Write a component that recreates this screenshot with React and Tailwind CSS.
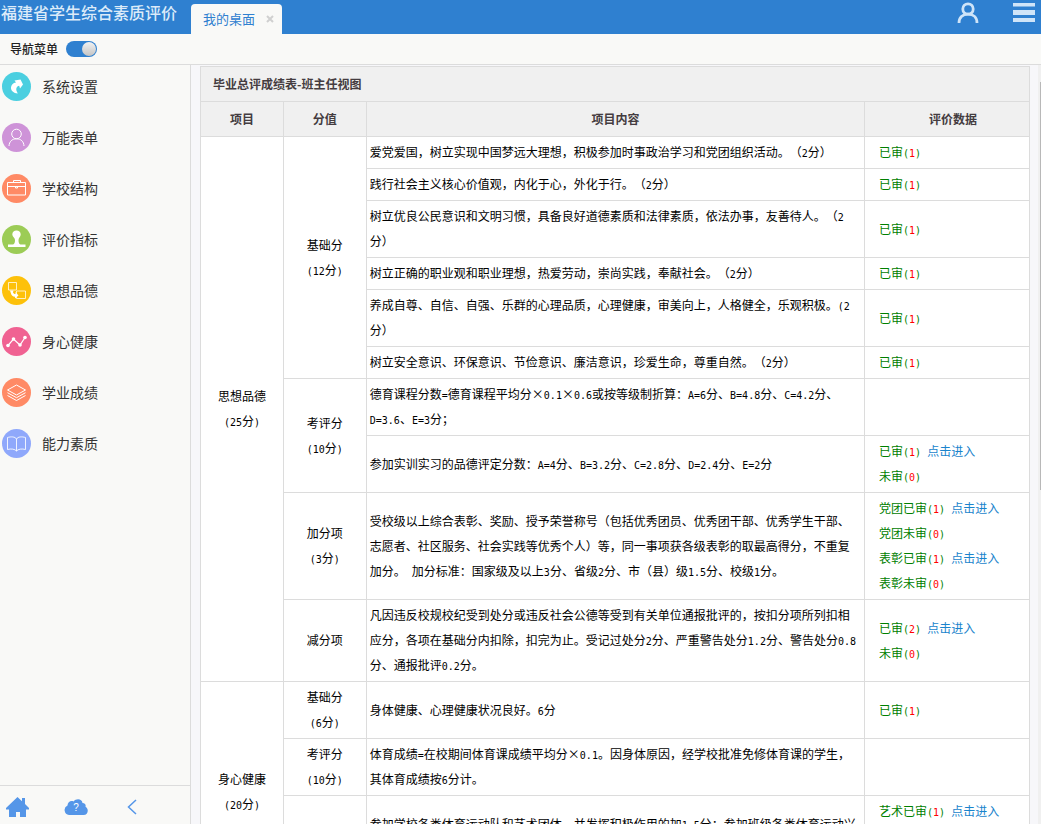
import { Fragment } from 'react';

const MENU = [
  { label: '系统设置', color: 'bg-[#4bcfe0]', icon: 'share' },
  { label: '万能表单', color: 'bg-[#ce93d8]', icon: 'person' },
  { label: '学校结构', color: 'bg-[#ff8a65]', icon: 'briefcase' },
  { label: '评价指标', color: 'bg-[#9ccc56]', icon: 'stamp' },
  { label: '思想品德', color: 'bg-[#fdc10a]', icon: 'swap' },
  { label: '身心健康', color: 'bg-[#f06292]', icon: 'chart' },
  { label: '学业成绩', color: 'bg-[#ff8a65]', icon: 'layers' },
  { label: '能力素质', color: 'bg-[#8fa8fb]', icon: 'book' },
];

const passed = (n, prefix = '', link = false) => ({ label: prefix + '已审', n, link });
const pending = (n, prefix = '') => ({ label: prefix + '未审', n, link: false });

const ROWS = [
  {
    group: { name: '思想品德', score: '(25分)', span: 10 },
    part: { name: '基础分', score: '(12分)', span: 6 },
    text: '爱党爱国，树立实现中国梦远大理想，积极参加时事政治学习和党团组织活动。（2分）',
    data: [passed(1)],
  },
  { text: '践行社会主义核心价值观，内化于心，外化于行。（2分）', data: [passed(1)] },
  { text: '树立优良公民意识和文明习惯，具备良好道德素质和法律素质，依法办事，友善待人。（2分）', data: [passed(1)] },
  { text: '树立正确的职业观和职业理想，热爱劳动，崇尚实践，奉献社会。（2分）', data: [passed(1)] },
  { text: '养成自尊、自信、自强、乐群的心理品质，心理健康，审美向上，人格健全，乐观积极。(2分）', data: [passed(1)] },
  { text: '树立安全意识、环保意识、节俭意识、廉洁意识，珍爱生命，尊重自然。（2分）', data: [passed(1)] },
  {
    part: { name: '考评分', score: '(10分)', span: 2 },
    text: '德育课程分数=德育课程平均分×0.1×0.6或按等级制折算：A=6分、B=4.8分、C=4.2分、D=3.6、E=3分；',
    data: [],
  },
  {
    text: '参加实训实习的品德评定分数：A=4分、B=3.2分、C=2.8分、D=2.4分、E=2分',
    data: [passed(1, '', true), pending(0)],
  },
  {
    part: { name: '加分项', score: '(3分)', span: 1 },
    text: '受校级以上综合表彰、奖励、授予荣誉称号（包括优秀团员、优秀团干部、优秀学生干部、志愿者、社区服务、社会实践等优秀个人）等，同一事项获各级表彰的取最高得分，不重复加分。 加分标准：国家级及以上3分、省级2分、市（县）级1.5分、校级1分。',
    data: [passed(1, '党团', true), pending(0, '党团'), passed(1, '表彰', true), pending(0, '表彰')],
  },
  {
    part: { name: '减分项', span: 1 },
    text: '凡因违反校规校纪受到处分或违反社会公德等受到有关单位通报批评的，按扣分项所列扣相应分，各项在基础分内扣除，扣完为止。受记过处分2分、严重警告处分1.2分、警告处分0.8分、通报批评0.2分。',
    data: [passed(2, '', true), pending(0)],
  },
  {
    group: { name: '身心健康', score: '(20分)', span: 3 },
    part: { name: '基础分', score: '(6分)', span: 1 },
    text: '身体健康、心理健康状况良好。6分',
    data: [passed(1)],
  },
  {
    part: { name: '考评分', score: '(10分)', span: 1 },
    text: '体育成绩=在校期间体育课成绩平均分×0.1。因身体原因，经学校批准免修体育课的学生，其体育成绩按6分计。',
    data: [],
  },
  {
    part: { name: '加分项', score: '(4分)', span: 1 },
    text: '参加学校各类体育运动队和艺术团体，并发挥积极作用的加1.5分；参加班级各类体育运动兴趣小组和艺术兴趣小组，并发挥积极作用的加1分；参加校级以上体育比赛和艺术展演获得名次的，按级别相应加分，同一事项取最高得分。',
    data: [passed(1, '艺术', true), pending(0, '艺术'), passed(1, '体育', true), pending(0, '体育')],
  },
];

/* Half-width characters are set in a monospaced face beside the Chinese text. */
function Mixed({ children }) {
  return children.split(/([\x20-\x7e]+)/).map((run, i) =>
    i % 2 ? (
      <span key={i} className="font-['DejaVu_Sans_Mono',monospace] text-[10px] leading-none">{run}</span>
    ) : (
      <Fragment key={i}>{run}</Fragment>
    ),
  );
}

function MenuIcon({ name }) {
  const line = { fill: 'none', stroke: '#fff', strokeWidth: 1 };
  return (
    <svg viewBox="0 0 29 29" className="size-[29px]" aria-hidden="true">
      {name === 'share' && (
        <path fill="#fff" d="M12.500 8.500 18.500 7.500 21 12.500 18 16.500 17.200 13.800C14.500 14.500 13 17 15.800 21.500 11.500 21.200 8.800 18.800 9 15.500 9.200 12.800 11 11 14 10.500Z" />
      )}
      {name === 'person' && (
        <g {...line}>
          <circle cx="14.5" cy="11" r="4.800" />
          <path d="M7 23c.3-4.500 3-7.200 7.500-7.200s7.200 2.700 7.500 7.200" />
        </g>
      )}
      {name === 'briefcase' && (
        <g {...line}>
          <path d="M5.500 8.500h18v12.500h-18zM5.500 12.500h18M11.500 8.500v-2h7v2M13.500 12.500v1.500h2v-1.500" />
        </g>
      )}
      {name === 'stamp' && (
        <path fill="#fff" d="M14.500 5.500a4 4 0 0 1 4.200 4c0 2.200-2.200 3.200-2.200 5.500 0 2.500.5 4.200 2 4.500h5V22H6v-2.500h5c1.500-.3 2-2 2-4.500 0-2.300-2.700-3.300-2.700-5.500a4 4 0 0 1 4.200-4z" />
      )}
      {name === 'swap' && (
        <g {...line} strokeOpacity="0.75">
          <path d="M6.500 6.500h8v7.500h-8zM14.500 15h9v7.500h-9z" />
          <path fill="#fff" stroke="none" d="m8 14.500 3.500 0-.5 2c.8 1.200 1.500 1.600 2.500 1.600v-2.100l3 3.500-3.500 3v-1.800c-2.200 0-3.700-1.200-4-3.200z" />
        </g>
      )}
      {name === 'chart' && (
        <g {...line} strokeWidth="1.200">
          <path d="M6 18.500 11.500 12l6.500 6L23 10.500" />
          <g fill="#fff" stroke="none">
            <circle cx="6" cy="18.500" r="1.800" />
            <circle cx="11.500" cy="12" r="1.800" />
            <circle cx="18" cy="18" r="1.800" />
            <circle cx="23" cy="10.500" r="1.800" />
          </g>
        </g>
      )}
      {name === 'layers' && (
        <g {...line}>
          <path d="m14.500 7 9 5-9 5-9-5zM5.500 14.700l9 5 9-5M5.500 17.500l9 5 9-5" />
        </g>
      )}
      {name === 'book' && (
        <g {...line} strokeOpacity="0.85">
          <path d="M14.500 10c-1.500-2.500-5.500-2.500-9-1.500v12c3.500-1 7.500-.5 9 1.500 1.500-2 5.500-2.500 9-1.500v-12c-3.500-1-7.500-1-9 1.500zM14.500 10v12" />
        </g>
      )}
    </svg>
  );
}

function Header() {
  return (
    <header className="flex h-[34px] shrink-0 bg-[#2f80d0]">
      <h1 className="w-[191px] shrink-0 pl-px text-[16px] leading-6 font-medium whitespace-nowrap text-[#dcebf9]">福建省学生综合素质评价</h1>
      <div className="mt-1 flex items-center gap-[11px] rounded-t bg-[#f9f9f7] pr-2 pl-3 text-[13px] text-[#2f80d0]">
        <a href="#desktop">我的桌面</a>
        <button type="button" aria-label="关闭" className="text-[#d0d0d0]">
          <svg viewBox="0 0 8 8" className="size-2" fill="none" stroke="currentColor" strokeWidth="2" aria-hidden="true">
            <path d="m1 1 6 6M7 1 1 7" />
          </svg>
        </button>
      </div>
      <div className="ml-auto flex items-start gap-[34px] pr-1.5 text-[#cfe4f8]">
        <button type="button" aria-label="用户">
          <svg viewBox="0 0 22 24" className="h-6 w-[22px]" fill="none" stroke="currentColor" strokeWidth="2.800" aria-hidden="true">
            <circle cx="11" cy="9" r="5.200" />
            <path d="M2 23c0-5.500 3.500-8.800 9-8.800s9 3.300 9 8.800" />
          </svg>
        </button>
        <button type="button" aria-label="菜单">
          <svg viewBox="0 0 22 24" className="h-6 w-[22px]" fill="currentColor" aria-hidden="true">
            <path d="M0 3h22v3.500H0zM0 10h22v5H0zM0 18h22v4H0z" />
          </svg>
        </button>
      </div>
    </header>
  );
}

function Sidebar() {
  return (
    <aside className="flex w-[191px] shrink-0 flex-col border-r border-[#dcdcdc] bg-[#f9f9f7]">
      <nav className="flex-1 pt-[7px]">
        <ul className="flex flex-col gap-[22px]">
          {MENU.map((m) => (
            <li key={m.label}>
              <a href={'#' + m.icon} className="flex items-center gap-[11px] pl-0.5 text-[14px] leading-[29px] text-[#333]">
                <span className={'rounded-full ' + m.color}>
                  <MenuIcon name={m.icon} />
                </span>
                {m.label}
              </a>
            </li>
          ))}
        </ul>
      </nav>
      <div className="flex h-[39px] items-center border-t border-[#dcdcdc] pt-1 pl-1.5 text-[#5596e8]">
        <a href="#home" aria-label="首页">
          <svg viewBox="0 0 24 20" className="h-5 w-6" fill="currentColor" aria-hidden="true">
            <path d="M11.500 0 16 4.200V1h3v6l4 4v1.500h-3V20h-6v-5h-4v5H3v-7.500H0V11z" />
          </svg>
        </a>
        <a href="#help" aria-label="帮助" className="ml-[34px]">
          <svg viewBox="0 0 24 16" className="h-4 w-6" aria-hidden="true">
            <path fill="currentColor" d="M5 16a5 5 0 0 1-1.500-9.500C3.500 3 7 1 9.500 2.500 12-.8 18-.5 18.500 4c3 .2 3.500 2.200 3 3.800C25 9.500 24.500 16 19.500 16z" />
            <text x="12" y="12" textAnchor="middle" fontSize="10" fontFamily="Liberation Sans" fill="#fff">?</text>
          </svg>
        </a>
        <button type="button" aria-label="收起" className="ml-[39px]">
          <svg viewBox="0 0 10 16" className="h-4 w-2.5" fill="none" stroke="currentColor" strokeWidth="1.500" aria-hidden="true">
            <path d="M9 1 1.500 8 9 15" />
          </svg>
        </button>
      </div>
    </aside>
  );
}

const CELL = 'border border-[#dcdcdc] ';

function Label({ item }) {
  return (
    <td rowSpan={item.span} className={CELL + 'pt-0.5 pb-1 text-center'}>
      {item.name}
      {item.score && (
        <div>
          <Mixed>{item.score}</Mixed>
        </div>
      )}
    </td>
  );
}

function ScoreTable() {
  return (
    <table className="w-full table-fixed border-collapse bg-white text-[12px] leading-[25px] text-black">
      <colgroup>
        <col className="w-[10%]" />
        <col className="w-[10%]" />
        <col />
        <col className="w-[165px]" />
      </colgroup>
      <thead className="bg-[#f0f0f0] text-[#443c40]">
        <tr className="h-[35px]">
          <th colSpan={4} className={CELL + 'pb-0.5 pl-3 text-left'}>毕业总评成绩表-班主任视图</th>
        </tr>
        <tr className="h-[35px]">
          <th className={CELL + 'pb-0.5'}>项目</th>
          <th className={CELL + 'pb-0.5'}>分值</th>
          <th className={CELL + 'pb-0.5'}>项目内容</th>
          <th className={CELL + 'pb-0.5 pl-3'}>评价数据</th>
        </tr>
      </thead>
      <tbody>
        {ROWS.map((r) => (
          <tr key={r.text}>
            {r.group && <Label item={r.group} />}
            {r.part && <Label item={r.part} />}
            <td className={CELL + 'px-[3px] pt-0.5 pb-1'}>
              <Mixed>{r.text}</Mixed>
            </td>
            <td className={CELL + 'pt-0.5 pb-1 pl-[14px] text-[#008000]'}>
              {r.data.map((d) => (
                <div key={d.label}>
                  {d.label}
                  <span className="font-['DejaVu_Sans_Mono',monospace] text-[10px] leading-none">
                    (<span className="text-[#ff0000]">{d.n}</span>){' '}
                  </span>
                  {d.link && <a href="#detail" className="text-[#1a84cc]">点击进入</a>}
                </div>
              ))}
            </td>
          </tr>
        ))}
      </tbody>
    </table>
  );
}

export default function App() {
  return (
    <div
      lang="zh-CN"
      className="flex h-screen flex-col overflow-hidden bg-[#f7f7fa] font-['Noto_Sans_CJK_SC',sans-serif] [text-spacing-trim:space-all]"
    >
      <Header />
      <div className="flex h-[31px] shrink-0 items-center gap-2 border-b border-[#dcdcdc] bg-[#f9f9f7] pl-[10px]">
        <label htmlFor="nav-toggle" className="text-[12px] font-medium text-[#222]">导航菜单</label>
        <input
          id="nav-toggle"
          type="checkbox"
          role="switch"
          defaultChecked
          className="flex h-4 w-[31px] appearance-none items-center rounded-full bg-[#2f80d0] px-px before:size-[14px] before:rounded-full before:bg-linear-to-b before:from-[#f2f2f2] before:to-[#c4c4c4] before:content-[''] checked:justify-end"
        />
      </div>
      <div className="flex min-h-0 flex-1">
        <Sidebar />
        <main className="min-w-0 flex-1 overflow-hidden pt-px pr-2 pl-[9px]">
          <ScoreTable />
        </main>
        <div className="flex w-[3px] shrink-0 justify-end bg-[#f0f0f0] pt-[17px]">
          <div className="h-[55%] w-px bg-[#b8b8b8]" />
        </div>
      </div>
    </div>
  );
}
